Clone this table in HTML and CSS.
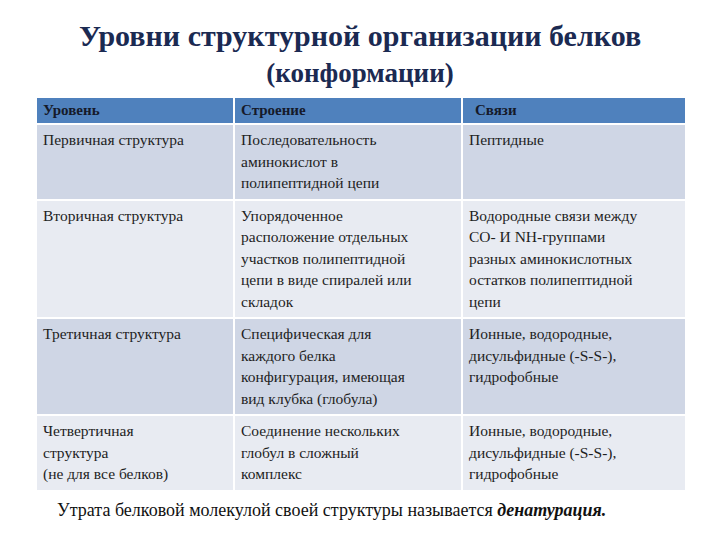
FILE: index.html
```html
<!DOCTYPE html>
<html lang="ru">
<head>
<meta charset="utf-8">
<link rel="stylesheet" href="styles.css">
</head>
<body>
<h1 class="heading">Уровни структурной организации белков<br><span class="heading-sub">(конформации)</span></h1>
<table class="levels">
  <colgroup><col class="lv-c1"><col class="lv-c2"><col class="lv-c3"></colgroup>
  <thead>
    <tr><th>Уровень</th><th>Строение</th><th class="lv-sv">Связи</th></tr>
  </thead>
  <tbody>
    <tr class="lv-dark r1"><td>Первичная структура</td><td>Последовательность<br>аминокислот в<br>полипептидной цепи</td><td>Пептидные</td></tr>
    <tr class="lv-light r2"><td>Вторичная структура</td><td>Упорядоченное<br>расположение отдельных<br>участков полипептидной<br>цепи в виде спиралей или<br>складок</td><td>Водородные связи между<br>СО- И NH-группами<br>разных аминокислотных<br>остатков полипептидной<br>цепи</td></tr>
    <tr class="lv-dark r3"><td>Третичная структура</td><td>Специфическая для<br>каждого белка<br>конфигурация, имеющая<br>вид клубка (глобула)</td><td>Ионные, водородные,<br>дисульфидные (-S-S-),<br>гидрофобные</td></tr>
    <tr class="lv-light r4"><td>Четвертичная<br>структура<br>(не для все белков)</td><td>Соединение нескольких<br>глобул в сложный<br>комплекс</td><td>Ионные, водородные,<br>дисульфидные (-S-S-),<br>гидрофобные</td></tr>
  </tbody>
</table>
<p class="footnote">Утрата белковой молекулой своей структуры называется <b><i>денатурация.</i></b></p>
</body>
</html>
```
FILE: styles.css
```css
body {
  margin: 0;
  padding-top: 18px;
  color: #1e1e1e;
  font-family: "Liberation Serif", serif;
}
h1, p, th, td, span, b, i {
  font-family: "Liberation Serif", serif;
}
.heading {
  margin: 0;
  text-align: center;
  font-size: 30px;
  line-height: 36px;
  font-weight: bold;
  color: #1b2a52;
}
.heading-sub {
  font-size: 27px;
}
.levels {
  margin: 7px 0 0 37px;
  width: 648px;
  border-collapse: collapse;
  table-layout: fixed;
  font-size: 15.5px;
  line-height: 21.5px;
}
.lv-c1 { width: 197px; }
.lv-c2 { width: 228px; }
.lv-c3 { width: 223px; }
.levels th {
  background: #4f81bd;
  color: #151a2a;
  font-weight: bold;
  text-align: left;
  height: 25px;
  padding: 0 6px;
  border: 2px solid #ffffff;
  border-top: 0;
  font-size: 15px;
}
.levels th:first-child, .levels td:first-child { border-left: 0; }
.levels th:last-child, .levels td:last-child { border-right: 0; }
.levels th.lv-sv { padding-left: 12px; }
.levels td {
  vertical-align: top;
  padding: 4px 6px 5px 6px;
  border: 2px solid #ffffff;
  white-space: nowrap;
}
.levels tbody tr:last-child td { border-bottom: 0; }
.r1 { height: 74px; }
.r2 { height: 115px; }
.r3 { height: 95px; }
.r4 { height: 73px; }
.lv-dark td { background: #cfd6e5; }
.lv-light td { background: #e8ebf2; }
.footnote {
  margin: 10px 0 0 57px;
  font-size: 18px;
  color: #111111;
}
```
